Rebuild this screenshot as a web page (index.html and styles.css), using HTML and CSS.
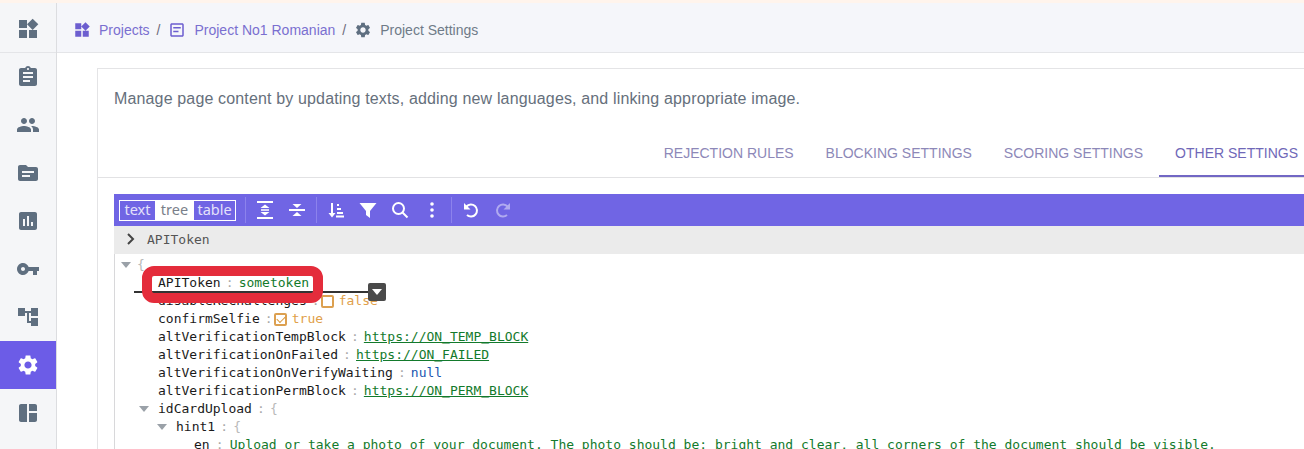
FILE: index.html
```html
<!DOCTYPE html>
<html lang="en">
<head>
<meta charset="utf-8">
<title>Project Settings</title>
<link rel="stylesheet" href="styles.css">
</head>
<body>
<div class="strip"></div>
<div class="app">
  <nav class="sidebar">
    <a class="side-item side-first"><svg class="side-icon" viewBox="0 0 24 24"><path d="M13 13v8h8v-8h-8zM3 21h8v-8H3v8zM3 3v8h8V3H3zm13.66-1.31L11 7.34 16.66 13l5.66-5.66-5.66-5.65z"/></svg></a>
    <a class="side-item"><svg class="side-icon" viewBox="0 0 24 24"><path d="M19 3h-4.18C14.4 1.84 13.3 1 12 1c-1.3 0-2.4.84-2.82 2H5c-1.1 0-2 .9-2 2v14c0 1.1.9 2 2 2h14c1.1 0 2-.9 2-2V5c0-1.1-.9-2-2-2zm-7 0c.55 0 1 .45 1 1s-.45 1-1 1-1-.45-1-1 .45-1 1-1zm2 14H7v-2h7v2zm3-4H7v-2h10v2zm0-4H7V7h10v2z"/></svg></a>
    <a class="side-item"><svg class="side-icon" viewBox="0 0 24 24"><path d="M16 11c1.66 0 2.99-1.34 2.99-3S17.66 5 16 5c-1.66 0-3 1.34-3 3s1.34 3 3 3zm-8 0c1.66 0 2.99-1.34 2.99-3S9.66 5 8 5C6.34 5 5 6.34 5 8s1.34 3 3 3zm0 2c-2.33 0-7 1.17-7 3.5V19h14v-2.5c0-2.33-4.67-3.5-7-3.5zm8 0c-.29 0-.62.02-.97.05 1.16.84 1.97 1.97 1.97 3.45V19h6v-2.5c0-2.33-4.67-3.5-7-3.5z"/></svg></a>
    <a class="side-item"><svg class="side-icon" viewBox="0 0 24 24"><path d="M20 6h-8l-2-2H4c-1.1 0-1.99.9-1.99 2L2 18c0 1.1.9 2 2 2h16c1.1 0 2-.9 2-2V8c0-1.1-.9-2-2-2zm-6 10H6v-2h8v2zm4-4H6v-2h12v2z"/></svg></a>
    <a class="side-item"><svg class="side-icon" viewBox="0 0 24 24"><path d="M19 3H5c-1.1 0-2 .9-2 2v14c0 1.1.9 2 2 2h14c1.1 0 2-.9 2-2V5c0-1.1-.9-2-2-2zM9 17H7v-7h2v7zm4 0h-2V7h2v10zm4 0h-2v-4h2v4z"/></svg></a>
    <a class="side-item"><svg class="side-icon" viewBox="0 0 24 24"><path d="M12.65 10C11.83 7.67 9.61 6 7 6c-3.31 0-6 2.69-6 6s2.69 6 6 6c2.61 0 4.83-1.67 5.65-4H17v4h4v-4h2v-4H12.65zM7 14c-1.1 0-2-.9-2-2s.9-2 2-2 2 .9 2 2-.9 2-2 2z"/></svg></a>
    <a class="side-item"><svg class="side-icon" viewBox="0 0 24 24"><path d="M22 11V3h-7v3H9V3H2v8h7V8h2v10h4v3h7v-8h-7v3h-2V8h2v3z"/></svg></a>
    <a class="side-item side-active"><svg class="side-icon" viewBox="0 0 24 24"><path d="M19.14 12.94c.04-.3.06-.61.06-.94 0-.32-.02-.64-.07-.94l2.03-1.58c.18-.14.23-.41.12-.61l-1.92-3.32c-.12-.22-.37-.29-.59-.22l-2.39.96c-.5-.38-1.03-.7-1.62-.94l-.36-2.54c-.04-.24-.24-.41-.48-.41h-3.84c-.24 0-.43.17-.47.41l-.36 2.54c-.59.24-1.13.57-1.62.94l-2.39-.96c-.22-.08-.47 0-.59.22L2.74 8.87c-.12.21-.08.47.12.61l2.03 1.58c-.05.3-.09.63-.09.94s.02.64.07.94l-2.03 1.58c-.18.14-.23.41-.12.61l1.92 3.32c.12.22.37.29.59.22l2.39-.96c.5.38 1.03.7 1.62.94l.36 2.54c.05.24.24.41.48.41h3.84c.24 0 .44-.17.47-.41l.36-2.54c.59-.24 1.13-.56 1.62-.94l2.39.96c.22.08.47 0 .59-.22l1.92-3.32c.12-.22.07-.47-.12-.61l-2.01-1.58zM12 15.6c-1.98 0-3.6-1.62-3.6-3.6s1.62-3.6 3.6-3.6 3.6 1.62 3.6 3.6-1.62 3.6-3.6 3.6z"/></svg></a>
    <a class="side-item"><svg class="side-icon" viewBox="0 0 24 24"><path d="M3 5v14c0 1.1.9 2 2 2h6V3H5c-1.1 0-2 .9-2 2zm10 16h6c1.1 0 2-.9 2-2v-7h-8v9zm6-18h-6v7h8V5c0-1.1-.9-2-2-2z"/></svg></a>
  </nav>
  <div class="main">
    <header class="topbar">
      <svg class="crumb-icon" viewBox="0 0 24 24"><path d="M13 13v8h8v-8h-8zM3 21h8v-8H3v8zM3 3v8h8V3H3zm13.66-1.31L11 7.34 16.66 13l5.66-5.66-5.66-5.65z"/></svg>
      <a class="crumb">Projects</a>
      <span class="crumb-sep">/</span>
      <svg class="crumb-icon" viewBox="0 0 24 24"><path d="M19 5v14H5V5h14m0-2H5c-1.1 0-2 .9-2 2v14c0 1.1.9 2 2 2h14c1.1 0 2-.9 2-2V5c0-1.1-.9-2-2-2zM7 8h10v2H7zM7 13h7v2H7z"/></svg>
      <a class="crumb">Project No1 Romanian</a>
      <span class="crumb-sep">/</span>
      <svg class="crumb-icon crumb-icon-current" viewBox="0 0 24 24"><path d="M19.14 12.94c.04-.3.06-.61.06-.94 0-.32-.02-.64-.07-.94l2.03-1.58c.18-.14.23-.41.12-.61l-1.92-3.32c-.12-.22-.37-.29-.59-.22l-2.39.96c-.5-.38-1.03-.7-1.62-.94l-.36-2.54c-.04-.24-.24-.41-.48-.41h-3.84c-.24 0-.43.17-.47.41l-.36 2.54c-.59.24-1.13.57-1.62.94l-2.39-.96c-.22-.08-.47 0-.59.22L2.74 8.87c-.12.21-.08.47.12.61l2.03 1.58c-.05.3-.09.63-.09.94s.02.64.07.94l-2.03 1.58c-.18.14-.23.41-.12.61l1.92 3.32c.12.22.37.29.59.22l2.39-.96c.5.38 1.03.7 1.62.94l.36 2.54c.05.24.24.41.48.41h3.84c.24 0 .44-.17.47-.41l.36-2.54c.59-.24 1.13-.56 1.62-.94l2.39.96c.22.08.47 0 .59-.22l1.92-3.32c.12-.22.07-.47-.12-.61l-2.01-1.58zM12 15.6c-1.98 0-3.6-1.62-3.6-3.6s1.62-3.6 3.6-3.6 3.6 1.62 3.6 3.6-1.62 3.6-3.6 3.6z"/></svg>
      <span class="crumb-current">Project Settings</span>
    </header>
    <section class="card">
      <p class="desc">Manage page content by updating texts, adding new languages, and linking appropriate image.</p>
      <div class="tabs">
        <a class="tab">REJECTION RULES</a>
        <a class="tab">BLOCKING SETTINGS</a>
        <a class="tab">SCORING SETTINGS</a>
        <a class="tab tab-active">OTHER SETTINGS</a>
      </div>
      <div class="editor">
        <div class="toolbar">
          <div class="modes">
            <span class="mode mode-text">text</span><span class="mode mode-active">tree</span><span class="mode mode-table">table</span>
          </div>
          <span class="tool-sep"></span>
          <button class="tool"><svg viewBox="0 0 20 20"><path d="M2 1h16v2H2zM2 17h16v2H2zM6 9.200h8v1.600H6z"/><path d="M10 4.500l4.500 3.500h-9zM10 15.500l4.500-3.500h-9z"/></svg></button>
          <button class="tool"><svg viewBox="0 0 20 20"><path d="M2 9h16v2H2z"/><path d="M10 8l4.500-4h-9zM10 12l4.500 4h-9z"/></svg></button>
          <span class="tool-sep"></span>
          <button class="tool"><svg viewBox="0 0 20 20"><path d="M5 3h2v10h2.500L6 17.500 2.500 13H5zM11 4h2v2h-2zM11 8h4v2h-4zM11 12h6v2h-6zM10 15.500h8v2h-8z"/></svg></button>
          <button class="tool"><svg viewBox="0 0 20 20"><path d="M1.500 3h17L12 11v7l-4-3v-4z"/></svg></button>
          <button class="tool"><svg viewBox="0 0 20 20"><circle class="tool-line" cx="8.500" cy="8.500" r="5.500"/><path class="tool-line" d="M12.500 12.500l5 5"/></svg></button>
          <button class="tool"><svg viewBox="0 0 20 20"><circle cx="10" cy="4" r="1.800"/><circle cx="10" cy="10" r="1.800"/><circle cx="10" cy="16" r="1.800"/></svg></button>
          <span class="tool-sep"></span>
          <button class="tool"><svg viewBox="0 0 20 20"><path class="tool-line" d="M5.500 6.500A6 6 0 1 1 6 15"/><path d="M3 3v6.500h6.500z"/></svg></button>
          <button class="tool tool-off"><svg viewBox="0 0 20 20"><path class="tool-line" d="M14.500 6.500A6 6 0 1 0 14 15"/><path d="M17 3v6.500h-6.500z"/></svg></button>
        </div>
        <div class="navbar">
          <svg class="nav-chevron" viewBox="0 0 10 12"><path d="M2 1l5 5-5 5"/></svg>
          <span class="nav-label">APIToken</span>
        </div>
        <div class="tree">
          <div class="row lvl0"><i class="toggle"></i><span class="brace">{</span></div>
          <div class="row lvl1"><span class="key">APIToken</span><span class="colon">:</span><span class="str">sometoken</span></div>
          <div class="row lvl1"><span class="key">disableReChallenges</span><span class="colon">:</span><i class="check"></i><span class="bool">false</span></div>
          <div class="row lvl1"><span class="key">confirmSelfie</span><span class="colon">:</span><i class="check check-on"></i><span class="bool">true</span></div>
          <div class="row lvl1"><span class="key">altVerificationTempBlock</span><span class="colon">:</span><a class="link">https://ON_TEMP_BLOCK</a></div>
          <div class="row lvl1"><span class="key">altVerificationOnFailed</span><span class="colon">:</span><a class="link">https://ON_FAILED</a></div>
          <div class="row lvl1"><span class="key">altVerificationOnVerifyWaiting</span><span class="colon">:</span><span class="null">null</span></div>
          <div class="row lvl1"><span class="key">altVerificationPermBlock</span><span class="colon">:</span><a class="link">https://ON_PERM_BLOCK</a></div>
          <div class="row lvl1"><i class="toggle"></i><span class="key">idCardUpload</span><span class="colon">:</span><span class="brace">{</span></div>
          <div class="row lvl2"><i class="toggle"></i><span class="key">hint1</span><span class="colon">:</span><span class="brace">{</span></div>
          <div class="row lvl3"><span class="key">en</span><span class="colon">:</span><span class="str">Upload or take a photo of your document. The photo should be: bright and clear, all corners of the document should be visible.</span></div>
          <div class="dropline"></div>
          <div class="dropbtn"></div>
          <div class="callout"></div>
        </div>
      </div>
    </section>
  </div>
</div>
</body>
</html>
```
FILE: styles.css
```css
* { box-sizing: border-box; }
html, body { margin: 0; height: 449px; overflow: hidden; background: #fff; }
body { font-family: "Liberation Sans", Arial, sans-serif; font-size: 14px; color: #6e6b7b; }
.strip { height: 3px; background: #fff4ec; }
.app { display: flex; height: 446px; }

.sidebar { flex: none; width: 57px; background: #f5f6f8; border-right: 1px solid #dcdde0; display: flex; flex-direction: column; }
.side-item { flex: none; height: 48px; display: flex; align-items: center; justify-content: center; }
.side-first { height: 50px; border-bottom: 1px solid #e4e5e8; padding-top: 2px; }
.side-icon { width: 24px; height: 24px; fill: #5f6f80; }
.side-active { background: #6c5ce7; }
.side-active .side-icon { fill: #fff; }

.main { flex: 1; min-width: 0; overflow: hidden; }
.topbar { height: 50px; background: #f5f6fa; border-bottom: 1px solid #e4e5e8; display: flex; align-items: center; padding: 4px 0 0 16px; }
.crumb-icon { flex: none; width: 18px; height: 18px; fill: #6c5ecf; margin-right: 8px; }
.crumb-icon-current { fill: #5f6f80; }
.crumb { color: #7a6fd0; }
.crumb-sep { color: #6e6b7b; margin: 0 8px 0 7px; }
.crumb-current { color: #6f7b88; }

.card { width: 1234px; margin: 15px 0 0 40px; border: 1px solid #e4e4e6; border-bottom: 0; padding: 0; height: 400px; }
.desc { margin: 0; padding: 20px 16px 0; height: 60px; line-height: 20px; color: #66707c; font-size: 16px; letter-spacing: .15px; }
.tabs { height: 49px; display: flex; justify-content: flex-end; border-bottom: 1px solid #e2e2e4; padding-right: 16px; }
.tab { height: 48px; padding: 16px 16px 0; line-height: 16px; color: #8d88b8; font-size: 14px; }
.tab-active { color: #7068b8; border-bottom: 2px solid #7267c4; }

.editor { margin: 16px 16px 0; }
.toolbar { height: 32px; background: #7065e4; display: flex; align-items: center; padding-left: 5px; }
.modes { flex: none; width: 117px; height: 21px; margin-right: 6px; border: 1px solid #fff; display: flex; font-family: "Noto Sans", sans-serif; font-size: 14.500px; line-height: 17px; color: #e4e1fb; text-align: center; }
.mode-text { width: 35px; }
.mode-table { width: 41px; }
.mode-active { width: 39px; background: #fff; color: #7a7f8a; }
.tool-sep { flex: none; width: 1px; height: 26px; background: #8c82ec; margin: 0 3px; }
.tool { flex: none; width: 32px; height: 32px; padding: 0; margin: 0; border: 0; background: none; display: flex; align-items: center; justify-content: center; }
.tool svg { width: 20px; height: 20px; fill: #fff; }
.tool-line { fill: none; stroke: #fff; stroke-width: 2; }
.tool-off { opacity: .45; }

.navbar { height: 28px; background: #ebebeb; display: flex; align-items: center; padding: 0 0 2px 12px; }
.nav-chevron { width: 10px; height: 12px; fill: none; stroke: #444; stroke-width: 2; }
.nav-label { margin-left: 11px; font-family: "DejaVu Sans Mono", monospace; font-size: 13px; color: #555; }

.tree { position: relative; height: 300px; border-left: 1px solid #d8d8da; padding-top: 2px; font-family: "DejaVu Sans Mono", monospace; font-size: 13px; color: #1a1a1a; }
.row { height: 18px; line-height: 18px; white-space: nowrap; display: flex; position: relative; }
.lvl0 { padding-left: 22px; }
.lvl1 { padding-left: 43px; }
.lvl2 { padding-left: 61px; }
.lvl3 { padding-left: 79px; }
.lvl3 .colon { width: 20px; }
.toggle { position: absolute; top: 6px; margin-left: -19px; width: 0; height: 0; border: 5px solid transparent; border-top: 6px solid #9aa1a8; border-bottom: 0; }
.lvl0 .toggle { margin-left: -16px; }
.colon { flex: none; width: 18px; text-align: center; color: #a9a9a9; }
.brace { color: #b9b9b9; }
.str { color: #137a2c; }
.link { color: #137a2c; text-decoration: underline; }
.null { color: #1a56b0; }
.bool { color: #dfa04a; margin-left: 5px; }
.check { flex: none; width: 13px; height: 13px; margin: 3px 0 0 -4px; border: 2px solid #dca050; border-radius: 2px; }
.check-on { position: relative; }
.check-on::after { content: ""; position: absolute; left: 1px; top: 1px; width: 7px; height: 4px; border-left: 1.500px solid #d9973a; border-bottom: 1.500px solid #d9973a; transform: rotate(-45deg); }

.dropline { position: absolute; left: 19px; top: 37px; width: 237px; height: 2px; background: #333; }
.dropbtn { position: absolute; left: 253px; top: 29px; width: 18px; height: 18px; background: #4a4a4a; border-radius: 2px; }
.dropbtn::after { content: ""; position: absolute; left: 4px; top: 6px; border: 5px solid transparent; border-top: 6px solid #fff; border-bottom: 0; }
.callout { position: absolute; left: 27px; top: 12px; width: 181px; height: 37px; border: 10px solid #e42c3b; border-radius: 12px; }
```
